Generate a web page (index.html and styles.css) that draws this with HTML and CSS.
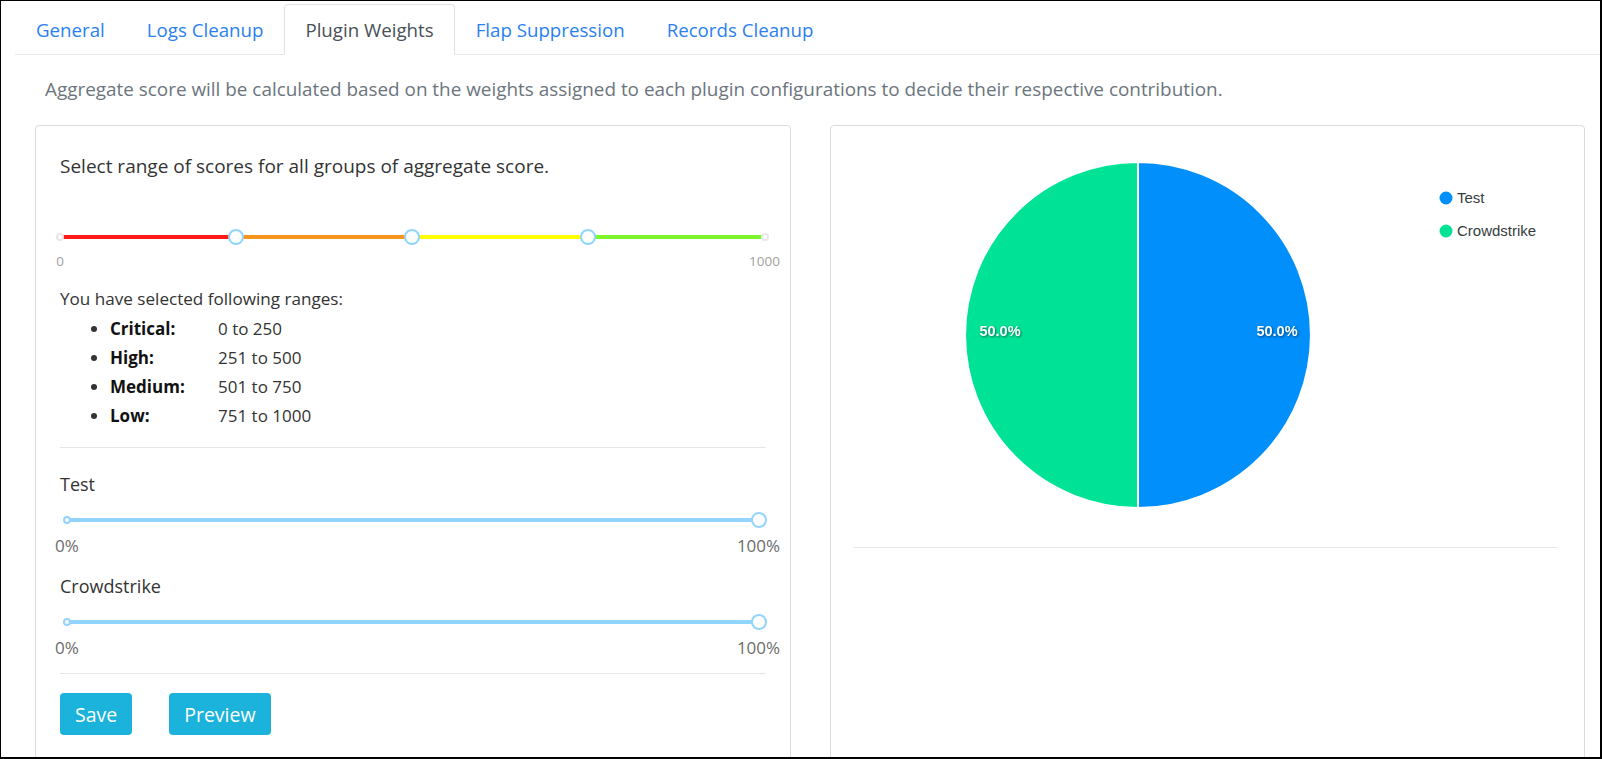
FILE: index.html
```html
<!DOCTYPE html>
<html lang="en">
<head>
<meta charset="utf-8">
<title>Plugin Weights</title>
<link rel="stylesheet" href="styles.css">
</head>
<body>
<div class="frame">
  <nav class="tabs">
    <a class="tab">General</a>
    <a class="tab">Logs Cleanup</a>
    <a class="tab active">Plugin Weights</a>
    <a class="tab">Flap Suppression</a>
    <a class="tab">Records Cleanup</a>
  </nav>
  <div class="content">
    <p class="desc">Aggregate score will be calculated based on the weights assigned to each plugin configurations to decide their respective contribution.</p>
    <div class="cards">
      <section class="card">
        <p class="lead">Select range of scores for all groups of aggregate score.</p>
        <div class="range">
          <div class="rail">
            <span class="seg red"></span>
            <span class="seg orange"></span>
            <span class="seg yellow"></span>
            <span class="seg green"></span>
            <span class="dot" style="left:0%"></span>
            <span class="dot" style="left:100%"></span>
            <span class="handle" style="left:25%"></span>
            <span class="handle" style="left:50%"></span>
            <span class="handle" style="left:75%"></span>
          </div>
          <div class="marks">
            <span class="mark" style="left:0%">0</span>
            <span class="mark" style="left:100%">1000</span>
          </div>
        </div>
        <p class="sel">You have selected following ranges:</p>
        <ul class="ranges">
          <li><b>Critical:</b><span>0 to 250</span></li>
          <li><b>High:</b><span>251 to 500</span></li>
          <li><b>Medium:</b><span>501 to 750</span></li>
          <li><b>Low:</b><span>751 to 1000</span></li>
        </ul>
        <hr class="rule">
        <div class="weight">
          <p class="wlabel">Test</p>
          <div class="wslider">
            <div class="wrail">
              <span class="wmin"></span>
              <span class="wmax" style="left:100%"></span>
            </div>
            <div class="wmarks">
              <span class="wmark" style="left:0%">0%</span>
              <span class="wmark" style="left:100%">100%</span>
            </div>
          </div>
        </div>
        <div class="weight">
          <p class="wlabel">Crowdstrike</p>
          <div class="wslider">
            <div class="wrail">
              <span class="wmin"></span>
              <span class="wmax" style="left:100%"></span>
            </div>
            <div class="wmarks">
              <span class="wmark" style="left:0%">0%</span>
              <span class="wmark" style="left:100%">100%</span>
            </div>
          </div>
        </div>
        <hr class="rule rule-bottom">
        <div class="actions">
          <button class="btn">Save</button>
          <button class="btn">Preview</button>
        </div>
      </section>
      <section class="card chart-card">
        <svg class="chart" width="703" height="385" viewBox="0 0 703 385">
          <path d="M284 185 L284 12 A173 173 0 0 0 284 358 Z" fill="#00e396" stroke="#fff" stroke-width="2"/>
          <path d="M284 185 L284 12 A173 173 0 0 1 284 358 Z" fill="#008ffb" stroke="#fff" stroke-width="2"/>
          <text class="plabel" x="146" y="182">50.0%</text>
          <text class="plabel" x="423" y="182">50.0%</text>
          <circle cx="592" cy="48" r="6.5" fill="#008ffb"/>
          <text class="legend" x="603" y="53">Test</text>
          <circle cx="592" cy="81" r="6.5" fill="#00e396"/>
          <text class="legend" x="603" y="86">Crowdstrike</text>
        </svg>
        <hr class="rule chart-rule">
      </section>
    </div>
  </div>
</div>
</body>
</html>
```

FILE: styles.css
```css
* { box-sizing: border-box; }

html, body {
  margin: 0;
  padding: 0;
  background: #fff;
}

body {
  font-family: "Open Sans", "Noto Sans", sans-serif;
  font-size: 17px;
  color: #212529;
}

.frame {
  width: 1602px;
  height: 759px;
  border-style: solid;
  border-color: #000;
  border-width: 1px 2px 2px 1px;
  overflow: hidden;
  background: #fff;
}

.tabs {
  display: flex;
  margin: 3px 0 0 14px;
  border-bottom: 1px solid #e3e6ea;
  height: 51px;
}

.tab {
  display: block;
  height: 51px;
  line-height: 49px;
  padding: 0 20px;
  border: 1px solid transparent;
  border-top-left-radius: 4px;
  border-top-right-radius: 4px;
  color: #2a7ff2;
  margin-bottom: -1px;
  white-space: nowrap;
  font-size: 18.7px;
}

.tab.active {
  color: #495057;
  background: #fff;
  border-color: #dee2e6 #dee2e6 #fff;
}

.content {
  padding: 0 15px 0 34px;
}

.desc {
  margin: 22px 0 0 10px;
  line-height: 25px;
  font-size: 18.9px;
  color: #6c757d;
}

.cards {
  display: grid;
  grid-template-columns: 1fr 1fr;
  column-gap: 39px;
  margin-top: 23px;
  height: 700px;
}

.card {
  border: 1px solid #dcdcdc;
  border-radius: 4px;
  padding: 28px 24px 24px 24px;
}

.lead, .sel, .wlabel {
  margin: 0;
  line-height: 25px;
  color: #333;
}

.lead {
  font-size: 19px;
}

.sel {
  font-size: 17.1px;
}

.wlabel {
  font-size: 18px;
}

/* Score range slider */
.range {
  margin-top: 50px;
}

.rail {
  position: relative;
  height: 16px;
  display: flex;
  align-items: center;
  margin-right: 1px;
}

.seg {
  flex: 1;
  height: 4px;
}
.seg.red { background: #ff1a1a; }
.seg.orange { background: #f7941d; }
.seg.yellow { background: #ffff00; }
.seg.green { background: #7cf52c; }

.dot {
  position: absolute;
  top: 4px;
  width: 8px;
  height: 8px;
  margin-left: -4px;
  border-radius: 50%;
  background: #fff;
  border: 2px solid #e8e8e8;
}

.handle {
  position: absolute;
  top: 0;
  width: 16px;
  height: 16px;
  margin-left: -8px;
  border-radius: 50%;
  background: #fff;
  border: 2px solid #91d5ff;
}

.marks {
  position: relative;
  height: 20px;
  margin-top: 6px;
  margin-right: 1px;
}

.mark {
  position: absolute;
  top: 0;
  transform: translateX(-50%);
  font-size: 13.5px;
  line-height: 20px;
  color: #a0a0a0;
}

.sel {
  margin-top: 15px;
}

.ranges {
  margin: 3px 0 0 0;
  padding: 0 0 0 50px;
  list-style: disc;
}

.ranges li {
  line-height: 29px;
  color: #333;
  font-size: 17px;
}

.ranges b {
  display: inline-block;
  width: 108px;
  color: #111;
}

.rule {
  border: 0;
  border-top: 1px solid #e6e6e6;
  margin: 17px 0 0 0;
}

/* Weight sliders */
.weight .wlabel {
  margin-top: 24px;
}
.weight + .weight .wlabel {
  margin-top: 17px;
}

.wslider {
  margin: 15px 7px 0 7px;
}

.wrail {
  position: relative;
  height: 16px;
}

.wrail::before {
  content: "";
  position: absolute;
  left: 0;
  right: 0;
  top: 6px;
  height: 4px;
  background: #91d5ff;
  border-radius: 2px;
}

.wmin {
  position: absolute;
  left: 0;
  top: 4px;
  width: 8px;
  height: 8px;
  margin-left: -4px;
  border-radius: 50%;
  background: #fff;
  border: 2px solid #91d5ff;
}

.wmax {
  position: absolute;
  top: 0;
  width: 16px;
  height: 16px;
  margin-left: -8px;
  border-radius: 50%;
  background: #fff;
  border: 2px solid #91d5ff;
}

.wmarks {
  position: relative;
  height: 22px;
  margin-top: 7px;
}

.wmark {
  position: absolute;
  top: 0;
  transform: translateX(-50%);
  font-size: 17px;
  line-height: 22px;
  color: #6c6c6c;
}

.rule-bottom {
  margin-top: 14px;
}

.actions {
  display: flex;
  gap: 37px;
  margin-top: 19px;
}

.btn {
  height: 42px;
  padding: 0 15px;
  border: 0;
  border-radius: 4px;
  background: #1bb2db;
  color: #fff;
  font-family: "Open Sans", "Noto Sans", sans-serif;
  font-size: 19.5px;
  font-weight: 500;
}

/* Chart */
.chart-card {
  padding: 24px 27px 24px 23px;
}

.chart {
  display: block;
}

.plabel {
  font-family: "Liberation Sans", Arial, sans-serif;
  font-size: 14.5px;
  font-weight: bold;
  fill: #fff;
  text-anchor: middle;
  dominant-baseline: middle;
  filter: drop-shadow(1px 1px 1px rgba(0, 0, 0, 0.5));
}

.legend {
  font-family: "Liberation Sans", Arial, sans-serif;
  font-size: 15px;
  fill: #373d3f;
}

.chart-rule {
  margin-top: 12px;
}
```
